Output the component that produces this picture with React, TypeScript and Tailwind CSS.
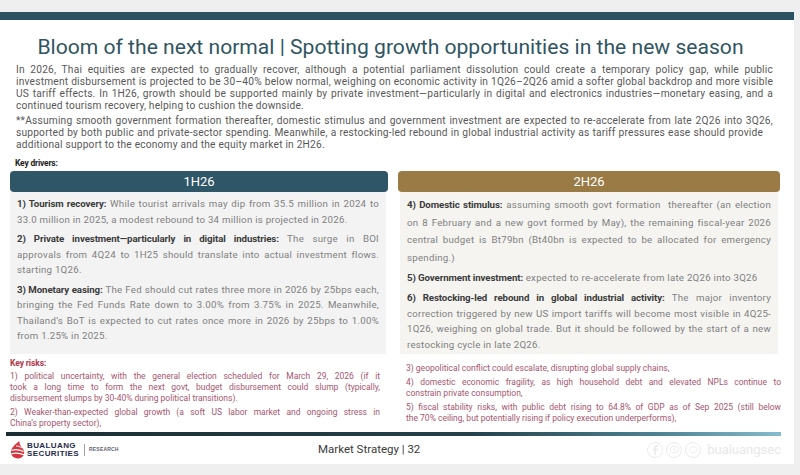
import React from "react";

type Item = { lh: string; lines: React.ReactNode[] };

function Lines({ lines, className }: { lines: React.ReactNode[]; className?: string }) {
  return (
    <div className={className}>
      {lines.map((l, i) => (
        <span
          key={i}
          className={i < lines.length - 1 ? "block text-justify [text-align-last:justify]" : "block"}
        >
          {l}
        </span>
      ))}
    </div>
  );
}

const B = ({ children }: { children: React.ReactNode }) => (
  <span className="font-bold text-[#3a3a3a] tracking-[-0.1px]">{children}</span>
);

const firstHalf: Item[] = [
  {
    lh: "leading-[15.5px]",
    lines: [
      <><B>1) Tourism recovery:</B> While tourist arrivals may dip from 35.5 million in 2024 to</>,
      "33.0 million in 2025, a modest rebound to 34 million is projected in 2026.",
    ],
  },
  {
    lh: "leading-[15.5px]",
    lines: [
      <><B>2) Private investment—particularly in digital industries:</B> The surge in BOI</>,
      "approvals from 4Q24 to 1H25 should translate into actual investment flows.",
      "starting 1Q26.",
    ],
  },
  {
    lh: "leading-[15.5px]",
    lines: [
      <><B>3) Monetary easing:</B> The Fed should cut rates three more in 2026 by 25bps each,</>,
      "bringing the Fed Funds Rate down to 3.00% from 3.75% in 2025. Meanwhile,",
      "Thailand’s BoT is expected to cut rates once more in 2026 by 25bps to 1.00%",
      "from 1.25% in 2025.",
    ],
  },
];

const secondHalf: Item[] = [
  {
    lh: "leading-[17.5px]",
    lines: [
      <><B>4) Domestic stimulus:</B> assuming smooth govt formation &nbsp;thereafter (an election</>,
      "on 8 February and a new govt formed by May), the remaining fiscal-year 2026",
      "central budget is Bt79bn (Bt40bn is expected to be allocated for emergency",
      "spending.)",
    ],
  },
  {
    lh: "leading-[16px]",
    lines: [<><B>5) Government investment:</B> expected to re-accelerate from late 2Q26 into 3Q26</>],
  },
  {
    lh: "leading-[15.5px]",
    lines: [
      <><B>6) Restocking-led rebound in global industrial activity:</B> The major inventory</>,
      "correction triggered by new US import tariffs will become most visible in 4Q25-",
      "1Q26, weighing on global trade. But it should be followed by the start of a new",
      "restocking cycle in late 2Q26.",
    ],
  },
];

const risksLeft = [
  [
    "1) political uncertainty, with the general election scheduled for March 29, 2026 (if it",
    "took a long time to form the next govt, budget disbursement could slump (typically,",
    "disbursement slumps by 30-40% during political transitions).",
  ],
  [
    "2) Weaker-than-expected global growth (a soft US labor market and ongoing stress in",
    "China’s property sector),",
  ],
];

const risksRight = [
  ["3) geopolitical conflict could escalate, disrupting global supply chains,"],
  [
    "4) domestic economic fragility, as high household debt and elevated NPLs continue to",
    "constrain private consumption,",
  ],
  [
    "5) fiscal stability risks, with public debt rising to 64.8% of GDP as of Sep 2025 (still below",
    "the 70% ceiling, but potentially rising if policy execution underperforms),",
  ],
];

function Panel({ title, color, box, items }: { title: string; color: string; box: string; items: Item[] }) {
  return (
    <div className="flex flex-col">
      <div className={`h-[21px] rounded-[4px] ${color} flex items-center justify-center text-[13px] text-white`}>
        {title}
      </div>
      <div className={`flex-1 ${box} px-[7px] pt-[4px] pb-[2px] flex flex-col gap-[4px] text-[9.7px] tracking-[0.25px] text-[#808080]`}>
        {items.map((it, i) => (
          <Lines key={i} lines={it.lines} className={it.lh} />
        ))}
      </div>
    </div>
  );
}

function Logo() {
  return (
    <div className="flex items-center gap-[2px]">
      <svg width="15" height="18" viewBox="0 0 15 18">
        <path d="M9.5 0 C5 3.5 0.5 7 1 12 C1.5 16.5 7 18.5 11 16.8 C14.5 15.2 15 11 13 8 C11.5 5.5 9 4 9.5 0 Z" fill="#d7343d" />
        <path d="M1.5 9.5 C5 8 9 8.5 13.5 10.5" stroke="#fff" strokeWidth="1.3" fill="none" />
        <path d="M1.2 13 C5 11.5 9.5 12 14.5 13.8" stroke="#fff" strokeWidth="1.3" fill="none" />
        <path d="M6 5 C8 5 10 5.5 12 7" stroke="#fff" strokeWidth="1" fill="none" />
      </svg>
      <div className="flex flex-col font-['Liberation_Sans',sans-serif] font-bold text-[#1f2b4d] text-[8px] leading-[8px] tracking-[0.4px]">
        <span>BUALUANG</span>
        <span>SECURITIES</span>
      </div>
      <div className="ml-[3px] h-[12px] w-px bg-[#9aa0a8]" />
      <span className="ml-[2px] text-[5px] font-bold text-[#5d6470] font-['Liberation_Sans',sans-serif] tracking-[0.2px]">
        RESEARCH
      </span>
    </div>
  );
}

function Social() {
  return (
    <div className="flex items-center gap-[3px]">
      <div className="w-[16px] h-[16px] rounded-full border-[1.5px] border-[#ebebeb] flex items-center justify-center">
        <svg width="8" height="10" viewBox="0 0 8 10">
          <path d="M5 10 V5.5 H6.5 L7 3.8 H5 V2.8 C5 2.3 5.2 2 5.8 2 H7 V0.4 C6.6 0.3 6 0.2 5.4 0.2 C4 0.2 3.2 1 3.2 2.5 V3.8 H1.7 V5.5 H3.2 V10 Z" fill="#ebebeb" />
        </svg>
      </div>
      <div className="w-[16px] h-[16px] rounded-full border-[1.5px] border-[#ebebeb] flex items-center justify-center">
        <svg width="9" height="7" viewBox="0 0 9 7">
          <rect x="0.6" y="0.6" width="7.8" height="5.8" rx="1.6" stroke="#ebebeb" strokeWidth="1" fill="none" />
          <path d="M3.6 2 L5.8 3.5 L3.6 5 Z" fill="#ebebeb" />
        </svg>
      </div>
      <div className="w-[16px] h-[16px] rounded-full border-[1.5px] border-[#ebebeb] flex items-center justify-center">
        <svg width="9" height="8" viewBox="0 0 9 8">
          <path d="M4.5 0.6 C2.3 0.6 0.6 1.9 0.6 3.5 C0.6 5 2 6.1 3.8 6.4 L3.6 7.5 L5.4 6.4 C7.2 6 8.4 4.9 8.4 3.5 C8.4 1.9 6.7 0.6 4.5 0.6 Z" stroke="#ebebeb" strokeWidth="0.9" fill="none" />
        </svg>
      </div>
      <span className="ml-[3px] text-[13px] leading-none font-['Roboto',sans-serif] text-[#e8e8e8]">bualuangsec</span>
    </div>
  );
}

export default function App() {
  return (
    <div className="w-[800px] h-[475px] bg-[#efefef] pt-[12px] overflow-hidden font-['Roboto',sans-serif]">
      <div className="w-[794px] h-[452px] bg-white flex flex-col">
        <div className="h-[8px] bg-[#2d5262]" />

        <div className="w-[781px] mt-[14px] h-[26px] text-center text-[21.1px] leading-[26px] text-[#2f5562]">
          Bloom of the next normal | Spotting growth opportunities in the new season
        </div>

        <div className="ml-[16px] w-[757px] mt-[4px] text-[10.2px] leading-[12px] tracking-[0.2px] text-[#585858]">
          <Lines
            lines={[
              "In 2026, Thai equities are expected to gradually recover, although a potential parliament dissolution could create a temporary policy gap, while public",
              "investment disbursement is projected to be 30–40% below normal, weighing on economic activity in 1Q26–2Q26 amid a softer global backdrop and more visible",
              "US tariff effects. In 1H26, growth should be supported mainly by private investment—particularly in digital and electronics industries—monetary easing, and a",
              "continued tourism recovery, helping to cushion the downside.",
            ]}
          />
          <Lines
            className="mt-[3px]"
            lines={[
              "**Assuming smooth government formation thereafter, domestic stimulus and government investment are expected to re-accelerate from late 2Q26 into 3Q26,",
              <span className="block pr-[10px]">supported by both public and private-sector spending. Meanwhile, a restocking-led rebound in global industrial activity as tariff pressures ease should provide</span>,
              "additional support to the economy and the equity market in 2H26.",
            ]}
          />
        </div>

        <div className="ml-[15px] mt-[7px] text-[8.5px] leading-[11px] font-bold text-[#1e1e1e] tracking-[-0.2px]">
          Key drivers:
        </div>

        <div className="ml-[10px] mt-[2px] w-[770px] h-[181px] grid grid-cols-[378px_382px] gap-x-[10px]">
          <Panel title="1H26" color="bg-[#2e5667]" box="bg-[#f3f3f3] mr-[2px]" items={firstHalf} />
          <Panel title="2H26" color="bg-[#9b7b45]" box="bg-[#f5f4f1] mx-[2px]" items={secondHalf} />
        </div>

        <div className="ml-[10px] mt-[6px] w-[771px] grid grid-cols-[370px_375px] gap-x-[26px] text-[8.5px] leading-[11px] text-[#a65670]">
          <div className="flex flex-col">
            <div className="font-bold text-[#b0364a] tracking-[-0.1px] mb-[2px]">Key risks:</div>
            <div className="flex flex-col gap-[3px]">
              {risksLeft.map((r, i) => (
                <Lines key={i} lines={r} />
              ))}
            </div>
          </div>
          <div className="pt-[5px] flex flex-col gap-[3px]">
            {risksRight.map((r, i) => (
              <Lines key={i} lines={r} />
            ))}
          </div>
        </div>

        <div className="ml-[6px] mt-[3px] w-[775px] h-[3.5px] bg-[linear-gradient(90deg,#1c2d33_0%,#24414a_60%,#4f8596_85%,#86bccd_100%)]" />

        <div className="w-[781px] flex items-center mt-[4px] h-[20px]">
          <div className="ml-[10px] w-[308px]">
            <Logo />
          </div>
          <div className="text-[11.5px] text-[#3a3a3a] font-['Roboto',sans-serif]">Market Strategy | 32</div>
          <div className="ml-auto">
            <Social />
          </div>
        </div>
      </div>
    </div>
  );
}
